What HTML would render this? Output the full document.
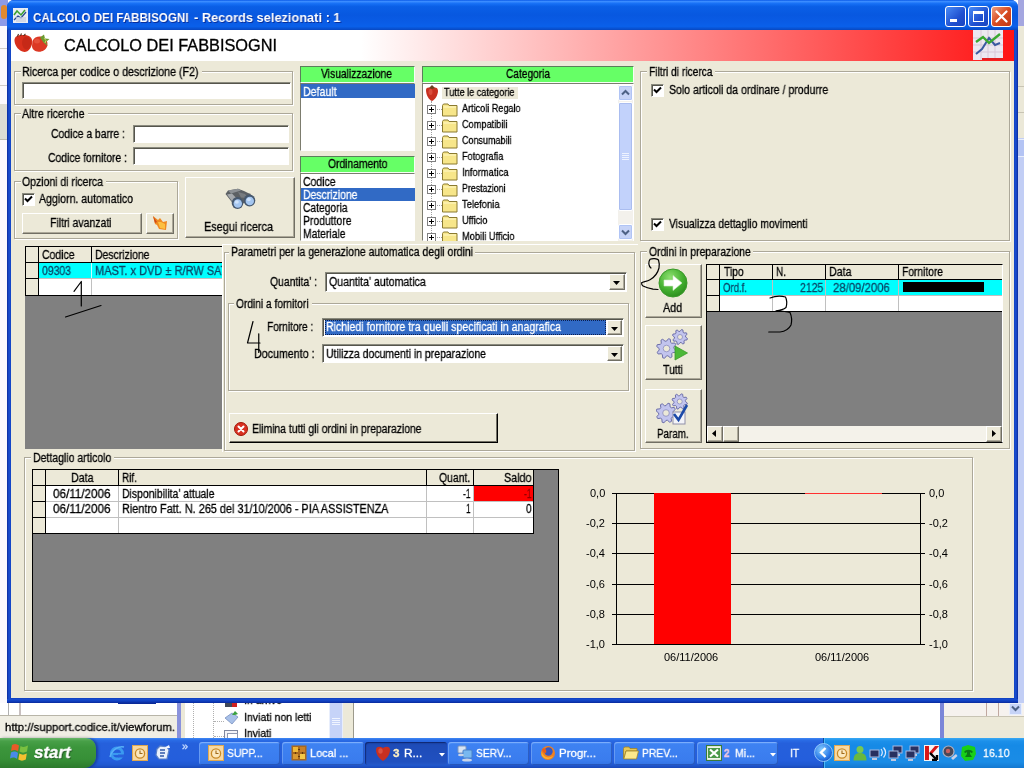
<!DOCTYPE html>
<html lang="it"><head><meta charset="utf-8"><title>CALCOLO DEI FABBISOGNI</title>
<style>
html,body{margin:0;padding:0}
body{width:1024px;height:768px;overflow:hidden;position:relative;background:#fff;font-family:"Liberation Sans",sans-serif;font-size:12.5px}
div,span.t,svg{position:absolute;box-sizing:border-box}
span.t{white-space:nowrap;transform-origin:0 0;display:block;will-change:transform;-webkit-text-stroke:0.3px currentColor}
.face{background:#ece9d8}
.grp{border:1px solid #aca899;box-shadow:1px 1px 0 #fff, inset 1px 1px 0 #fff}
.inp{background:#fff;border:1px solid;border-color:#8a8a7e #fff #fff #8a8a7e;box-shadow:inset 1px 1px 0 #55554c}
.btn{background:#ece9d8;border:1px solid;border-color:#fff #716f64 #716f64 #fff;box-shadow:inset -1px -1px 0 #aca899}
.ghd{background:#66ff66;border:1px solid;border-color:#5a7f5a #f4fff4 #f4fff4 #5a7f5a}
.lst{background:#fff;border:1px solid;border-color:#7c7c6e #fff #fff #7c7c6e}
.sel{background:#316ac5}
.cell{background:#fff}
.hd{background:#ece9d8}

</style></head>
<body>
<div style="left:0px;top:0px;width:1024px;height:768px;background:#fff"></div>
<div style="left:0px;top:0px;width:8px;height:26px;background:#8c9be8"></div>
<div style="left:0px;top:26px;width:8px;height:680px;background:#fbf9fd"></div>
<div style="left:1px;top:5px;width:6px;height:14px;background:#e08a30;border-radius:3px"></div>
<div style="left:0px;top:48px;width:8px;height:1px;background:#d0ccc8"></div>
<div style="left:0px;top:85px;width:8px;height:1px;background:#d0ccc8"></div>
<div style="left:0px;top:104px;width:7px;height:35px;background:#deddd4"></div>
<div style="left:0px;top:139px;width:7px;height:1px;background:#c0bcb0"></div>
<div style="left:1018px;top:0px;width:6px;height:26px;background:#a4a6e0"></div>
<div style="left:1018px;top:26px;width:6px;height:112px;background:#ebe8d8"></div>
<div style="left:1018px;top:86px;width:6px;height:1px;background:#c8c4b4"></div>
<div style="left:1018px;top:112px;width:6px;height:1px;background:#c8c4b4"></div>
<div style="left:1018px;top:138px;width:6px;height:565px;background:#c2cef5"></div>
<div style="left:1018px;top:139px;width:6px;height:18px;background:#b4c4f4;border-top:1px solid #e8eefc;border-bottom:1px solid #e8eefc"></div>
<div style="left:7px;top:0px;width:1011px;height:703px;background:linear-gradient(to right,#0a2a9c 0,#1a4ed0 2px,#1244c4 4px,#1244c4 1007px,#1a4ed0 1009px,#0a2a9c 1011px);border-radius:7px 7px 0 0"></div>
<div style="left:7px;top:699px;width:1011px;height:4px;background:linear-gradient(to bottom,#1a4ed0,#1040c0 50%,#0a2a9c)"></div>
<div style="left:7px;top:0px;width:1011px;height:30px;border-radius:7px 7px 0 0;background:linear-gradient(to bottom,#0a5ae8 0%,#3a8cff 5%,#1670f5 12%,#0a5fe6 22%,#0858e0 50%,#0a5ce6 75%,#0a60ea 88%,#0850d0 96%,#0a48c0 100%)"></div>
<div class="face" style="left:11px;top:30px;width:1003px;height:668px;"></div>
<div style="left:11px;top:30px;width:1003px;height:31px;background:linear-gradient(to right,#fff 0,#fff 350px,#ff1414 1003px)"></div>
<span class="t" style="left:32.70px;top:10px;font-size:13px;line-height:15px;color:#fff;font-weight:700;transform:scaleX(0.8934);text-shadow:1px 1px 0 #0a2f9a;-webkit-text-stroke:0;">CALCOLO DEI FABBISOGNI</span>
<span class="t" style="left:193.90px;top:10px;font-size:13px;line-height:15px;color:#fff;font-weight:700;transform:scaleX(0.9844);text-shadow:1px 1px 0 #0a2f9a;-webkit-text-stroke:0;">- Records selezionati : 1</span>
<span class="t" style="left:63.90px;top:37px;font-size:16px;line-height:17px;color:#000;transform:scaleX(1.0194);">CALCOLO DEI FABBISOGNI</span>
<div style="left:945px;top:6px;width:21px;height:21px;border:1px solid #fff;border-radius:3px;background:linear-gradient(135deg,#4a8cf6,#2050d0 60%,#1a44c0)"></div>
<div style="left:968px;top:6px;width:21px;height:21px;border:1px solid #fff;border-radius:3px;background:linear-gradient(135deg,#4a8cf6,#2050d0 60%,#1a44c0)"></div>
<div style="left:991px;top:6px;width:21px;height:21px;border:1px solid #fff;border-radius:3px;background:linear-gradient(135deg,#f0a080,#d84a20 50%,#c03818)"></div>
<div style="left:950px;top:19px;width:7px;height:3px;background:#fff"></div>
<div style="left:973px;top:11px;width:11px;height:11px;border:1px solid #fff;border-top:3px solid #fff"></div>
<svg style="left:995px;top:10px" width="13" height="13" viewBox="0 0 13 13"><path d="M1.5 1.5 L11.5 11.5 M11.5 1.5 L1.5 11.5" stroke="#fff" stroke-width="2.2" stroke-linecap="round"/></svg>
<div class="grp" style="left:14px;top:71px;width:279px;height:34px;"></div>
<div class="face" style="left:21px;top:65px;width:181px;height:13px;"></div>
<span class="t" style="left:22.40px;top:65px;font-size:12.5px;line-height:14px;color:#000;transform:scaleX(0.8525);">Ricerca per codice o descrizione (F2)</span>
<div class="inp" style="left:22px;top:82px;width:269px;height:17px;"></div>
<div class="grp" style="left:14px;top:113px;width:279px;height:58px;"></div>
<div class="face" style="left:21px;top:107px;width:67px;height:13px;"></div>
<span class="t" style="left:22.40px;top:107px;font-size:12.5px;line-height:14px;color:#000;transform:scaleX(0.8487);">Altre ricerche</span>
<span class="t" style="left:50.65px;top:127px;font-size:12.5px;line-height:14px;color:#000;transform:scaleX(0.8320);">Codice a barre :</span>
<div class="inp" style="left:133px;top:125px;width:156px;height:18px;"></div>
<span class="t" style="left:48.15px;top:151px;font-size:12.5px;line-height:14px;color:#000;transform:scaleX(0.8299);">Codice fornitore :</span>
<div class="inp" style="left:133px;top:147px;width:156px;height:18px;"></div>
<div class="grp" style="left:14px;top:181px;width:164px;height:58px;"></div>
<div class="face" style="left:21px;top:175px;width:85px;height:13px;"></div>
<span class="t" style="left:22.40px;top:175px;font-size:12.5px;line-height:14px;color:#000;transform:scaleX(0.8387);">Opzioni di ricerca</span>
<div class="inp" style="left:22px;top:193px;width:13px;height:13px;"></div>
<svg style="left:24px;top:195px" width="9" height="9" viewBox="0 0 9 9"><path d="M1 3.5 L3.5 6 L8 1.5" fill="none" stroke="#000" stroke-width="2"/></svg>
<span class="t" style="left:39.40px;top:192px;font-size:12.5px;line-height:14px;color:#000;transform:scaleX(0.8454);">Aggiorn. automatico</span>
<div class="btn" style="left:22px;top:213px;width:120px;height:21px;"></div>
<span class="t" style="left:50.40px;top:216px;font-size:12.5px;line-height:14px;color:#000;transform:scaleX(0.8351);">Filtri avanzati</span>
<div class="btn" style="left:146px;top:213px;width:28px;height:21px;"></div>
<div class="btn" style="left:185px;top:177px;width:110px;height:61px;"></div>
<span class="t" style="left:203.90px;top:220px;font-size:12.5px;line-height:14px;color:#000;transform:scaleX(0.8712);">Esegui ricerca</span>
<div class="ghd" style="left:300px;top:66px;width:115px;height:17px;"></div>
<span class="t" style="left:321.40px;top:67px;font-size:12.5px;line-height:14px;color:#000;transform:scaleX(0.8262);">Visualizzazione</span>
<div class="lst" style="left:300px;top:83px;width:115px;height:68px;"></div>
<div class="sel" style="left:301px;top:84px;width:114px;height:14px;"></div>
<span class="t" style="left:302.60px;top:85px;font-size:12.5px;line-height:14px;color:#fff;transform:scaleX(0.8458);">Default</span>
<div class="ghd" style="left:300px;top:156px;width:115px;height:17px;"></div>
<span class="t" style="left:327.90px;top:157px;font-size:12.5px;line-height:14px;color:#000;transform:scaleX(0.8234);">Ordinamento</span>
<div class="lst" style="left:300px;top:173px;width:115px;height:68px;"></div>
<div class="sel" style="left:301px;top:188px;width:114px;height:13px;"></div>
<span class="t" style="left:302.60px;top:175px;font-size:12.5px;line-height:14px;color:#000;transform:scaleX(0.8350);">Codice</span>
<span class="t" style="left:302.60px;top:188px;font-size:12.5px;line-height:14px;color:#fff;transform:scaleX(0.8344);">Descrizione</span>
<span class="t" style="left:302.60px;top:201px;font-size:12.5px;line-height:14px;color:#000;transform:scaleX(0.8210);">Categoria</span>
<span class="t" style="left:302.60px;top:214px;font-size:12.5px;line-height:14px;color:#000;transform:scaleX(0.8308);">Produttore</span>
<span class="t" style="left:302.60px;top:227px;font-size:12.5px;line-height:14px;color:#000;transform:scaleX(0.8265);">Materiale</span>
<div class="ghd" style="left:422px;top:66px;width:212px;height:17px;"></div>
<span class="t" style="left:506.40px;top:67px;font-size:12.5px;line-height:14px;color:#000;transform:scaleX(0.8118);">Categoria</span>
<div class="lst" style="left:422px;top:83px;width:212px;height:158px;"></div>
<div class="face" style="left:442px;top:87px;width:76px;height:12px;"></div>
<span class="t" style="left:443.90px;top:86px;font-size:11.5px;line-height:12px;color:#000;transform:scaleX(0.7972);">Tutte le categorie</span>
<div style="left:431px;top:101px;width:1px;height:140px;border-left:1px dotted #a0a0a0"></div>
<span class="t" style="left:461.90px;top:102px;font-size:11.5px;line-height:12px;color:#000;transform:scaleX(0.7889);">Articoli Regalo</span>
<div style="left:432px;top:109px;width:10px;height:1px;border-top:1px dotted #a0a0a0"></div>
<div style="left:427px;top:105px;width:9px;height:9px;background:#fff;border:1px solid #808080"></div>
<div style="left:429px;top:109px;width:5px;height:1px;background:#000"></div>
<div style="left:431px;top:107px;width:1px;height:5px;background:#000"></div>
<svg style="left:442px;top:103px" width="16" height="14" viewBox="0 0 16 14"><path d="M0.5 2.5 L1.5 1 L6 1 L7 2.5 L15 2.5 L15 13 L0.5 13 Z" fill="#f7e68a" stroke="#8a7a30" stroke-width="1"/><path d="M1.5 4 L14 4" stroke="#fff8c8" stroke-width="1"/></svg>
<span class="t" style="left:461.90px;top:118px;font-size:11.5px;line-height:12px;color:#000;transform:scaleX(0.7998);">Compatibili</span>
<div style="left:432px;top:125px;width:10px;height:1px;border-top:1px dotted #a0a0a0"></div>
<div style="left:427px;top:121px;width:9px;height:9px;background:#fff;border:1px solid #808080"></div>
<div style="left:429px;top:125px;width:5px;height:1px;background:#000"></div>
<div style="left:431px;top:123px;width:1px;height:5px;background:#000"></div>
<svg style="left:442px;top:119px" width="16" height="14" viewBox="0 0 16 14"><path d="M0.5 2.5 L1.5 1 L6 1 L7 2.5 L15 2.5 L15 13 L0.5 13 Z" fill="#f7e68a" stroke="#8a7a30" stroke-width="1"/><path d="M1.5 4 L14 4" stroke="#fff8c8" stroke-width="1"/></svg>
<span class="t" style="left:461.90px;top:134px;font-size:11.5px;line-height:12px;color:#000;transform:scaleX(0.7822);">Consumabili</span>
<div style="left:432px;top:141px;width:10px;height:1px;border-top:1px dotted #a0a0a0"></div>
<div style="left:427px;top:137px;width:9px;height:9px;background:#fff;border:1px solid #808080"></div>
<div style="left:429px;top:141px;width:5px;height:1px;background:#000"></div>
<div style="left:431px;top:139px;width:1px;height:5px;background:#000"></div>
<svg style="left:442px;top:135px" width="16" height="14" viewBox="0 0 16 14"><path d="M0.5 2.5 L1.5 1 L6 1 L7 2.5 L15 2.5 L15 13 L0.5 13 Z" fill="#f7e68a" stroke="#8a7a30" stroke-width="1"/><path d="M1.5 4 L14 4" stroke="#fff8c8" stroke-width="1"/></svg>
<span class="t" style="left:461.90px;top:150px;font-size:11.5px;line-height:12px;color:#000;transform:scaleX(0.7966);">Fotografia</span>
<div style="left:432px;top:157px;width:10px;height:1px;border-top:1px dotted #a0a0a0"></div>
<div style="left:427px;top:153px;width:9px;height:9px;background:#fff;border:1px solid #808080"></div>
<div style="left:429px;top:157px;width:5px;height:1px;background:#000"></div>
<div style="left:431px;top:155px;width:1px;height:5px;background:#000"></div>
<svg style="left:442px;top:151px" width="16" height="14" viewBox="0 0 16 14"><path d="M0.5 2.5 L1.5 1 L6 1 L7 2.5 L15 2.5 L15 13 L0.5 13 Z" fill="#f7e68a" stroke="#8a7a30" stroke-width="1"/><path d="M1.5 4 L14 4" stroke="#fff8c8" stroke-width="1"/></svg>
<span class="t" style="left:461.90px;top:166px;font-size:11.5px;line-height:12px;color:#000;transform:scaleX(0.8174);">Informatica</span>
<div style="left:432px;top:173px;width:10px;height:1px;border-top:1px dotted #a0a0a0"></div>
<div style="left:427px;top:169px;width:9px;height:9px;background:#fff;border:1px solid #808080"></div>
<div style="left:429px;top:173px;width:5px;height:1px;background:#000"></div>
<div style="left:431px;top:171px;width:1px;height:5px;background:#000"></div>
<svg style="left:442px;top:167px" width="16" height="14" viewBox="0 0 16 14"><path d="M0.5 2.5 L1.5 1 L6 1 L7 2.5 L15 2.5 L15 13 L0.5 13 Z" fill="#f7e68a" stroke="#8a7a30" stroke-width="1"/><path d="M1.5 4 L14 4" stroke="#fff8c8" stroke-width="1"/></svg>
<span class="t" style="left:461.90px;top:182px;font-size:11.5px;line-height:12px;color:#000;transform:scaleX(0.7646);">Prestazioni</span>
<div style="left:432px;top:189px;width:10px;height:1px;border-top:1px dotted #a0a0a0"></div>
<div style="left:427px;top:185px;width:9px;height:9px;background:#fff;border:1px solid #808080"></div>
<div style="left:429px;top:189px;width:5px;height:1px;background:#000"></div>
<div style="left:431px;top:187px;width:1px;height:5px;background:#000"></div>
<svg style="left:442px;top:183px" width="16" height="14" viewBox="0 0 16 14"><path d="M0.5 2.5 L1.5 1 L6 1 L7 2.5 L15 2.5 L15 13 L0.5 13 Z" fill="#f7e68a" stroke="#8a7a30" stroke-width="1"/><path d="M1.5 4 L14 4" stroke="#fff8c8" stroke-width="1"/></svg>
<span class="t" style="left:461.90px;top:198px;font-size:11.5px;line-height:12px;color:#000;transform:scaleX(0.8144);">Telefonia</span>
<div style="left:432px;top:205px;width:10px;height:1px;border-top:1px dotted #a0a0a0"></div>
<div style="left:427px;top:201px;width:9px;height:9px;background:#fff;border:1px solid #808080"></div>
<div style="left:429px;top:205px;width:5px;height:1px;background:#000"></div>
<div style="left:431px;top:203px;width:1px;height:5px;background:#000"></div>
<svg style="left:442px;top:199px" width="16" height="14" viewBox="0 0 16 14"><path d="M0.5 2.5 L1.5 1 L6 1 L7 2.5 L15 2.5 L15 13 L0.5 13 Z" fill="#f7e68a" stroke="#8a7a30" stroke-width="1"/><path d="M1.5 4 L14 4" stroke="#fff8c8" stroke-width="1"/></svg>
<span class="t" style="left:461.90px;top:214px;font-size:11.5px;line-height:12px;color:#000;transform:scaleX(0.8031);">Ufficio</span>
<div style="left:432px;top:221px;width:10px;height:1px;border-top:1px dotted #a0a0a0"></div>
<div style="left:427px;top:217px;width:9px;height:9px;background:#fff;border:1px solid #808080"></div>
<div style="left:429px;top:221px;width:5px;height:1px;background:#000"></div>
<div style="left:431px;top:219px;width:1px;height:5px;background:#000"></div>
<svg style="left:442px;top:215px" width="16" height="14" viewBox="0 0 16 14"><path d="M0.5 2.5 L1.5 1 L6 1 L7 2.5 L15 2.5 L15 13 L0.5 13 Z" fill="#f7e68a" stroke="#8a7a30" stroke-width="1"/><path d="M1.5 4 L14 4" stroke="#fff8c8" stroke-width="1"/></svg>
<span class="t" style="left:461.90px;top:230px;font-size:11.5px;line-height:12px;color:#000;transform:scaleX(0.8079);">Mobili Ufficio</span>
<div style="left:432px;top:237px;width:10px;height:1px;border-top:1px dotted #a0a0a0"></div>
<div style="left:427px;top:233px;width:9px;height:9px;background:#fff;border:1px solid #808080"></div>
<div style="left:429px;top:237px;width:5px;height:1px;background:#000"></div>
<div style="left:431px;top:235px;width:1px;height:5px;background:#000"></div>
<svg style="left:442px;top:231px" width="16" height="14" viewBox="0 0 16 14"><path d="M0.5 2.5 L1.5 1 L6 1 L7 2.5 L15 2.5 L15 13 L0.5 13 Z" fill="#f7e68a" stroke="#8a7a30" stroke-width="1"/><path d="M1.5 4 L14 4" stroke="#fff8c8" stroke-width="1"/></svg>
<div style="left:618px;top:85px;width:15px;height:156px;background:#f3f1ec"></div>
<div style="left:618px;top:85px;width:15px;height:16px;background:#c6d3f7;border:1px solid #fff;border-radius:2px;box-shadow:inset 0 0 0 1px #b0c4f5"></div>
<div style="left:618px;top:102px;width:15px;height:109px;background:#c2d2fb;border:1px solid #fff;border-radius:2px;box-shadow:inset 0 0 0 1px #aabdf0"></div>
<div style="left:618px;top:224px;width:15px;height:16px;background:#c6d3f7;border:1px solid #fff;border-radius:2px;box-shadow:inset 0 0 0 1px #b0c4f5"></div>
<svg style="left:621px;top:89px" width="9" height="7" viewBox="0 0 9 7"><path d="M1 5.5 L4.5 2 L8 5.5" fill="none" stroke="#4d6185" stroke-width="2"/></svg>
<svg style="left:621px;top:229px" width="9" height="7" viewBox="0 0 9 7"><path d="M1 1.5 L4.5 5 L8 1.5" fill="none" stroke="#4d6185" stroke-width="2"/></svg>
<div style="left:622px;top:153px;width:7px;height:1px;background:#eef3ff"></div>
<div style="left:622px;top:155px;width:7px;height:1px;background:#eef3ff"></div>
<div style="left:622px;top:157px;width:7px;height:1px;background:#eef3ff"></div>
<div style="left:622px;top:159px;width:7px;height:1px;background:#eef3ff"></div>
<div class="face" style="left:422px;top:241px;width:213px;height:3px;"></div>
<div class="face" style="left:300px;top:241px;width:116px;height:3px;"></div>
<div class="grp" style="left:640px;top:71px;width:370px;height:170px;"></div>
<div class="face" style="left:647px;top:65px;width:68px;height:13px;"></div>
<span class="t" style="left:648.90px;top:65px;font-size:12.5px;line-height:14px;color:#000;transform:scaleX(0.8162);">Filtri di ricerca</span>
<div class="inp" style="left:651px;top:84px;width:13px;height:13px;"></div>
<svg style="left:653px;top:86px" width="9" height="9" viewBox="0 0 9 9"><path d="M1 3.5 L3.5 6 L8 1.5" fill="none" stroke="#000" stroke-width="2"/></svg>
<div class="inp" style="left:651px;top:218px;width:13px;height:13px;"></div>
<svg style="left:653px;top:220px" width="9" height="9" viewBox="0 0 9 9"><path d="M1 3.5 L3.5 6 L8 1.5" fill="none" stroke="#000" stroke-width="2"/></svg>
<span class="t" style="left:668.90px;top:83px;font-size:12.5px;line-height:14px;color:#000;transform:scaleX(0.8426);">Solo articoli da ordinare / produrre</span>
<span class="t" style="left:668.90px;top:217px;font-size:12.5px;line-height:14px;color:#000;transform:scaleX(0.8283);">Visualizza dettaglio movimenti</span>
<div style="left:25px;top:246px;width:200px;height:203px;background:#808080"></div>
<div style="left:25px;top:246px;width:200px;height:50px;background:#000"></div>
<div class="hd" style="left:26px;top:247px;width:198px;height:16px;"></div>
<div class="hd" style="left:26px;top:263px;width:13px;height:32px;"></div>
<div style="left:39px;top:263px;width:185px;height:15px;background:#00ffff"></div>
<div class="cell" style="left:39px;top:279px;width:185px;height:16px;"></div>
<div style="left:26px;top:262px;width:198px;height:1px;background:#000"></div>
<div style="left:26px;top:278px;width:13px;height:1px;background:#000"></div>
<div style="left:38px;top:247px;width:1px;height:48px;background:#000"></div>
<div style="left:91px;top:247px;width:1px;height:16px;background:#000"></div>
<div style="left:91px;top:263px;width:1px;height:15px;background:#c8ffff"></div>
<div style="left:91px;top:279px;width:1px;height:16px;background:#c0c0c0"></div>
<div style="left:39px;top:278px;width:185px;height:1px;background:#c0c0c0"></div>
<span class="t" style="left:41.90px;top:248px;font-size:12.5px;line-height:14px;color:#000;transform:scaleX(0.8350);">Codice</span>
<span class="t" style="left:95.15px;top:248px;font-size:12.5px;line-height:14px;color:#000;transform:scaleX(0.8344);">Descrizione</span>
<span class="t" style="left:42.40px;top:264px;font-size:12.5px;line-height:14px;color:#0a4868;transform:scaleX(0.8342);">09303</span>
<span class="t" style="left:95.15px;top:264px;font-size:12.5px;line-height:14px;color:#0a4868;transform:scaleX(0.8821);">MAST. x DVD ± R/RW SATA</span>
<div class="face" style="left:222px;top:244px;width:416px;height:208px;border-left:1px solid #fff;border-top:1px solid #fff"></div>
<div class="grp" style="left:224px;top:252px;width:411px;height:199px;"></div>
<div class="face" style="left:229px;top:246px;width:246px;height:13px;"></div>
<span class="t" style="left:230.65px;top:245px;font-size:12.5px;line-height:14px;color:#000;transform:scaleX(0.8352);">Parametri per la generazione automatica degli ordini</span>
<span class="t" style="left:269.90px;top:275px;font-size:12.5px;line-height:14px;color:#000;transform:scaleX(0.8305);">Quantita' :</span>
<div class="inp" style="left:325px;top:272px;width:302px;height:20px;"></div>
<span class="t" style="left:328.90px;top:275px;font-size:12.5px;line-height:14px;color:#000;transform:scaleX(0.8467);">Quantita' automatica</span>
<div class="btn" style="left:609px;top:274px;width:16px;height:16px;"></div>
<div class="grp" style="left:228px;top:303px;width:401px;height:88px;"></div>
<div class="face" style="left:234px;top:297px;width:78px;height:13px;"></div>
<span class="t" style="left:236.15px;top:297px;font-size:12.5px;line-height:14px;color:#000;transform:scaleX(0.8152);">Ordini a fornitori</span>
<span class="t" style="left:266.90px;top:320px;font-size:12.5px;line-height:14px;color:#000;transform:scaleX(0.8118);">Fornitore :</span>
<div class="inp" style="left:322px;top:318px;width:302px;height:19px;"></div>
<div class="sel" style="left:325px;top:320px;width:281px;height:15px;border:1px dotted #0a1e50"></div>
<span class="t" style="left:325.65px;top:320px;font-size:12.5px;line-height:14px;color:#fff;transform:scaleX(0.8456);">Richiedi fornitore tra quelli specificati in anagrafica</span>
<div class="btn" style="left:607px;top:320px;width:15px;height:15px;"></div>
<span class="t" style="left:253.90px;top:347px;font-size:12.5px;line-height:14px;color:#000;transform:scaleX(0.8536);">Documento :</span>
<div class="inp" style="left:322px;top:344px;width:302px;height:19px;"></div>
<span class="t" style="left:325.65px;top:347px;font-size:12.5px;line-height:14px;color:#000;transform:scaleX(0.8374);">Utilizza documenti in preparazione</span>
<div class="btn" style="left:607px;top:346px;width:15px;height:15px;"></div>
<svg style="left:613px;top:281px" width="7" height="4" viewBox="0 0 7 4"><path d="M0 0 L7 0 L3.5 4 Z" fill="#000"/></svg>
<svg style="left:611px;top:327px" width="7" height="4" viewBox="0 0 7 4"><path d="M0 0 L7 0 L3.5 4 Z" fill="#000"/></svg>
<svg style="left:611px;top:353px" width="7" height="4" viewBox="0 0 7 4"><path d="M0 0 L7 0 L3.5 4 Z" fill="#000"/></svg>
<div style="left:229px;top:413px;width:269px;height:30px;border:1px solid;border-color:#fff #000 #000 #fff;box-shadow:inset -1px -1px 0 #716f64;background:#ece9d8"></div>
<svg style="left:234px;top:422px" width="14" height="14" viewBox="0 0 14 14"><circle cx="7" cy="7" r="6.5" fill="#d83020" stroke="#a01808" stroke-width="1"/><path d="M4.5 4.5 L9.5 9.5 M9.5 4.5 L4.5 9.5" stroke="#fff" stroke-width="2" stroke-linecap="round"/></svg>
<span class="t" style="left:252.40px;top:422px;font-size:12.5px;line-height:14px;color:#000;transform:scaleX(0.8297);">Elimina tutti gli ordini in preparazione</span>
<div class="grp" style="left:640px;top:251px;width:370px;height:198px;"></div>
<div class="face" style="left:647px;top:245px;width:106px;height:13px;"></div>
<span class="t" style="left:648.90px;top:245px;font-size:12.5px;line-height:14px;color:#000;transform:scaleX(0.8272);">Ordini in preparazione</span>
<div class="btn" style="left:645px;top:264px;width:57px;height:54px;"></div>
<div class="btn" style="left:645px;top:325px;width:57px;height:55px;"></div>
<div class="btn" style="left:645px;top:389px;width:57px;height:54px;"></div>
<span class="t" style="left:663.40px;top:301px;font-size:12.5px;line-height:14px;color:#000;transform:scaleX(0.8629);">Add</span>
<span class="t" style="left:663.15px;top:363px;font-size:12.5px;line-height:14px;color:#000;transform:scaleX(0.8382);">Tutti</span>
<span class="t" style="left:657.10px;top:427px;font-size:12.5px;line-height:14px;color:#000;transform:scaleX(0.7842);">Param.</span>
<div style="left:706px;top:264px;width:297px;height:179px;background:#808080;border:1px solid #000;border-right:1px solid #fff"></div>
<div class="hd" style="left:707px;top:265px;width:295px;height:15px;"></div>
<div class="hd" style="left:707px;top:280px;width:13px;height:31px;"></div>
<div style="left:720px;top:280px;width:282px;height:15px;background:#00ffff"></div>
<div class="cell" style="left:720px;top:296px;width:282px;height:15px;"></div>
<div style="left:707px;top:279px;width:295px;height:1px;background:#000"></div>
<div style="left:707px;top:295px;width:13px;height:1px;background:#000"></div>
<div style="left:720px;top:295px;width:282px;height:1px;background:#c0c0c0"></div>
<div style="left:707px;top:311px;width:295px;height:1px;background:#000"></div>
<div style="left:719px;top:265px;width:1px;height:46px;background:#000"></div>
<div style="left:772px;top:265px;width:1px;height:15px;background:#000"></div>
<div style="left:772px;top:280px;width:1px;height:31px;background:#c0c0c0"></div>
<div style="left:825px;top:265px;width:1px;height:15px;background:#000"></div>
<div style="left:825px;top:280px;width:1px;height:31px;background:#c0c0c0"></div>
<div style="left:898px;top:265px;width:1px;height:15px;background:#000"></div>
<div style="left:898px;top:280px;width:1px;height:31px;background:#c0c0c0"></div>
<span class="t" style="left:723.65px;top:265px;font-size:12.5px;line-height:14px;color:#000;transform:scaleX(0.8173);">Tipo</span>
<span class="t" style="left:775.65px;top:265px;font-size:12.5px;line-height:14px;color:#000;transform:scaleX(0.8000);">N.</span>
<span class="t" style="left:828.90px;top:265px;font-size:12.5px;line-height:14px;color:#000;transform:scaleX(0.8521);">Data</span>
<span class="t" style="left:901.80px;top:265px;font-size:12.5px;line-height:14px;color:#000;transform:scaleX(0.8195);">Fornitore</span>
<span class="t" style="left:723.40px;top:281px;font-size:12.5px;line-height:14px;color:#0a4868;transform:scaleX(0.7676);">Ord.f.</span>
<span class="t" style="left:800.00px;top:281px;font-size:12.5px;line-height:14px;color:#0a4868;transform:scaleX(0.8360);">2125</span>
<span class="t" style="left:833.40px;top:281px;font-size:12.5px;line-height:14px;color:#0a4868;transform:scaleX(0.9079);">28/09/2006</span>
<div style="left:903px;top:282px;width:81px;height:10px;background:#000"></div>
<div style="left:707px;top:426px;width:295px;height:16px;background:#f4f2ea"></div>
<div class="btn" style="left:707px;top:426px;width:16px;height:16px;"></div>
<div class="btn" style="left:723px;top:426px;width:16px;height:16px;"></div>
<div class="btn" style="left:986px;top:426px;width:16px;height:16px;"></div>
<svg style="left:712px;top:430px" width="4" height="7" viewBox="0 0 4 7"><path d="M4 0 L4 7 L0 3.5 Z" fill="#000"/></svg>
<svg style="left:992px;top:430px" width="4" height="7" viewBox="0 0 4 7"><path d="M0 0 L0 7 L4 3.5 Z" fill="#000"/></svg>
<div class="grp" style="left:24px;top:457px;width:949px;height:234px;"></div>
<div class="face" style="left:31px;top:451px;width:83px;height:13px;"></div>
<span class="t" style="left:33.15px;top:451px;font-size:12.5px;line-height:14px;color:#000;transform:scaleX(0.8404);">Dettaglio articolo</span>
<div style="left:32px;top:469px;width:527px;height:213px;background:#808080;border:1px solid #000"></div>
<div class="hd" style="left:33px;top:470px;width:501px;height:16px;"></div>
<div class="hd" style="left:33px;top:486px;width:13px;height:47px;"></div>
<div class="cell" style="left:46px;top:486px;width:488px;height:47px;"></div>
<div style="left:474px;top:486px;width:60px;height:15px;background:#ff0000"></div>
<div style="left:33px;top:485px;width:13px;height:1px;background:#000"></div>
<div style="left:33px;top:501px;width:13px;height:1px;background:#000"></div>
<div style="left:46px;top:501px;width:488px;height:1px;background:#c0c0c0"></div>
<div style="left:33px;top:517px;width:13px;height:1px;background:#000"></div>
<div style="left:46px;top:517px;width:488px;height:1px;background:#c0c0c0"></div>
<div style="left:33px;top:485px;width:501px;height:1px;background:#000"></div>
<div style="left:33px;top:533px;width:501px;height:1px;background:#000"></div>
<div style="left:533px;top:470px;width:1px;height:64px;background:#000"></div>
<div style="left:45px;top:470px;width:1px;height:64px;background:#000"></div>
<div style="left:118px;top:470px;width:1px;height:16px;background:#000"></div>
<div style="left:118px;top:486px;width:1px;height:47px;background:#c0c0c0"></div>
<div style="left:426px;top:470px;width:1px;height:16px;background:#000"></div>
<div style="left:426px;top:486px;width:1px;height:47px;background:#c0c0c0"></div>
<div style="left:473px;top:470px;width:1px;height:16px;background:#000"></div>
<div style="left:473px;top:486px;width:1px;height:47px;background:#c0c0c0"></div>
<span class="t" style="left:71.15px;top:471px;font-size:12.5px;line-height:14px;color:#000;transform:scaleX(0.8521);">Data</span>
<span class="t" style="left:121.90px;top:471px;font-size:12.5px;line-height:14px;color:#000;transform:scaleX(0.8000);">Rif.</span>
<span class="t" style="left:438.65px;top:471px;font-size:12.5px;line-height:14px;color:#000;transform:scaleX(0.8326);">Quant.</span>
<span class="t" style="left:503.65px;top:471px;font-size:12.5px;line-height:14px;color:#000;transform:scaleX(0.8598);">Saldo</span>
<span class="t" style="left:53.15px;top:487px;font-size:12.5px;line-height:14px;color:#000;transform:scaleX(0.9328);">06/11/2006</span>
<span class="t" style="left:121.90px;top:487px;font-size:12.5px;line-height:14px;color:#000;transform:scaleX(0.8349);">Disponibilita' attuale</span>
<span class="t" style="left:462.50px;top:487px;font-size:12.5px;line-height:14px;color:#000;transform:scaleX(0.6742);">-1</span>
<span class="t" style="left:523.50px;top:487px;font-size:12.5px;line-height:14px;color:#900000;transform:scaleX(0.6742);">-1</span>
<span class="t" style="left:53.15px;top:502px;font-size:12.5px;line-height:14px;color:#000;transform:scaleX(0.9328);">06/11/2006</span>
<span class="t" style="left:121.90px;top:502px;font-size:12.5px;line-height:14px;color:#000;transform:scaleX(0.8697);">Rientro Fatt. N. 265 del 31/10/2006 - PIA ASSISTENZA</span>
<span class="t" style="left:465.50px;top:502px;font-size:12.5px;line-height:14px;color:#000;transform:scaleX(0.6472);">1</span>
<span class="t" style="left:525.50px;top:502px;font-size:12.5px;line-height:14px;color:#000;transform:scaleX(0.7910);">0</span>
<div style="left:612px;top:493px;width:313px;height:1px;background:#000"></div>
<span class="t" style="left:589.70px;top:487px;font-size:11px;line-height:12px;color:#000;-webkit-text-stroke:0;">0,0</span>
<span class="t" style="left:929.40px;top:487px;font-size:11px;line-height:12px;color:#000;-webkit-text-stroke:0;">0,0</span>
<div style="left:612px;top:523px;width:313px;height:1px;background:#000"></div>
<span class="t" style="left:586.03px;top:517px;font-size:11px;line-height:12px;color:#000;-webkit-text-stroke:0;">-0,2</span>
<span class="t" style="left:929.40px;top:517px;font-size:11px;line-height:12px;color:#000;-webkit-text-stroke:0;">-0,2</span>
<div style="left:612px;top:553px;width:313px;height:1px;background:#000"></div>
<span class="t" style="left:586.03px;top:547px;font-size:11px;line-height:12px;color:#000;-webkit-text-stroke:0;">-0,4</span>
<span class="t" style="left:929.40px;top:547px;font-size:11px;line-height:12px;color:#000;-webkit-text-stroke:0;">-0,4</span>
<div style="left:612px;top:584px;width:313px;height:1px;background:#000"></div>
<span class="t" style="left:586.03px;top:578px;font-size:11px;line-height:12px;color:#000;-webkit-text-stroke:0;">-0,6</span>
<span class="t" style="left:929.40px;top:578px;font-size:11px;line-height:12px;color:#000;-webkit-text-stroke:0;">-0,6</span>
<div style="left:612px;top:614px;width:313px;height:1px;background:#000"></div>
<span class="t" style="left:586.03px;top:608px;font-size:11px;line-height:12px;color:#000;-webkit-text-stroke:0;">-0,8</span>
<span class="t" style="left:929.40px;top:608px;font-size:11px;line-height:12px;color:#000;-webkit-text-stroke:0;">-0,8</span>
<div style="left:612px;top:644px;width:313px;height:1px;background:#000"></div>
<span class="t" style="left:586.03px;top:638px;font-size:11px;line-height:12px;color:#000;-webkit-text-stroke:0;">-1,0</span>
<span class="t" style="left:929.40px;top:638px;font-size:11px;line-height:12px;color:#000;-webkit-text-stroke:0;">-1,0</span>
<div style="left:654px;top:493px;width:77px;height:151px;background:#ff0000"></div>
<div style="left:805px;top:493px;width:77px;height:1px;background:#ff3030"></div>
<div style="left:616px;top:493px;width:1px;height:152px;background:#000"></div>
<div style="left:920px;top:493px;width:1px;height:152px;background:#000"></div>
<span class="t" style="left:663.88px;top:651px;font-size:11px;line-height:12px;color:#000;-webkit-text-stroke:0;">06/11/2006</span>
<span class="t" style="left:814.88px;top:651px;font-size:11px;line-height:12px;color:#000;-webkit-text-stroke:0;">06/11/2006</span>
<div style="left:0px;top:703px;width:1024px;height:35px;background:#fff"></div>
<div style="left:8px;top:703px;width:1px;height:13px;background:#b0b0b0"></div>
<div style="left:19px;top:703px;width:2px;height:13px;background:#c8c0c0"></div>
<div style="left:118px;top:703px;width:38px;height:1px;background:#0a2a98"></div>
<div style="left:0px;top:715px;width:178px;height:23px;background:#f0eee4;border-top:1px solid #b8b5a8"></div>
<span class="t" style="left:4.65px;top:721px;font-size:11.5px;line-height:12px;color:#000;transform:scaleX(0.9923);">http://support.codice.it/viewforum.</span>
<div style="left:177px;top:703px;width:4px;height:35px;background:#8a92dc"></div>
<div style="left:181px;top:703px;width:4px;height:35px;background:#ece9d8"></div>
<div style="left:193px;top:703px;width:1px;height:35px;border-left:1px dotted #b0b0b0"></div>
<div style="left:213px;top:703px;width:1px;height:35px;border-left:1px dotted #b0b0b0"></div>
<div style="left:214px;top:721px;width:10px;height:1px;border-top:1px dotted #b0b0b0"></div>
<div style="left:214px;top:736px;width:10px;height:1px;border-top:1px dotted #b0b0b0"></div>
<span class="t" style="left:244.10px;top:694px;font-size:11.5px;line-height:12px;color:#000;transform:scaleX(0.9146);clip-path:inset(9px 0 0 0);">In arrivo</span>
<span class="t" style="left:244.10px;top:711px;font-size:11.5px;line-height:12px;color:#000;transform:scaleX(0.9182);">Inviati non letti</span>
<span class="t" style="left:244.10px;top:727px;font-size:11.5px;line-height:12px;color:#000;transform:scaleX(0.9086);">Inviati</span>
<svg style="left:223px;top:703px" width="17" height="35" viewBox="0 0 17 35"><rect x="2" y="0" width="9" height="4" fill="#404858"/><rect x="9" y="0" width="5" height="4" fill="#d02020"/><path d="M2 15 L9 10 L15 14 L9 21 Z" fill="#a8c0e8" stroke="#7890c0" stroke-width=".8"/><path d="M9 12 L12 8 L15 11 L12 12 Z" fill="#3aa040"/><rect x="1.5" y="27.5" width="13" height="9" fill="#f4f4f8" stroke="#8088a0" stroke-width="1"/><rect x="4.500" y="30.5" width="10" height="6" fill="#fff" stroke="#9098b0" stroke-width="1"/></svg>
<div style="left:329px;top:703px;width:14px;height:35px;background:#c6d3f8;border-left:1px solid #e8eefc;border-right:1px solid #e8eefc"></div>
<div style="left:332px;top:718px;width:8px;height:1px;background:#f0f4ff"></div>
<div style="left:332px;top:720px;width:8px;height:1px;background:#f0f4ff"></div>
<div style="left:332px;top:722px;width:8px;height:1px;background:#f0f4ff"></div>
<div style="left:332px;top:724px;width:8px;height:1px;background:#f0f4ff"></div>
<div style="left:343px;top:703px;width:10px;height:35px;background:#ece9d8"></div>
<div style="left:353px;top:703px;width:1px;height:35px;background:#9c9a8c"></div>
<div style="left:940px;top:703px;width:4px;height:35px;background:#7b86d8"></div>
<div style="left:944px;top:703px;width:80px;height:35px;background:#ece9d8"></div>
<div style="left:944px;top:703px;width:80px;height:13px;background:#f6f2ee"></div>
<div style="left:944px;top:716px;width:80px;height:1px;background:#c8c4b4"></div>
<div style="left:986px;top:703px;width:1px;height:13px;background:#c0a8a0"></div>
<div style="left:998px;top:703px;width:1px;height:13px;background:#c0a8a0"></div>
<div style="left:1009px;top:703px;width:13px;height:12px;background:#c6d3f7;border:1px solid #e8eefc"></div>
<svg style="left:1011px;top:705px" width="9" height="7" viewBox="0 0 9 7"><path d="M1 1.5 L4.5 5 L8 1.5" fill="none" stroke="#4d6185" stroke-width="2"/></svg>
<div style="left:0px;top:738px;width:1024px;height:30px;background:linear-gradient(to bottom,#3f88f4 0%,#2a6ce6 7%,#2560dc 18%,#245edc 75%,#2058d0 90%,#1a48b8 100%)"></div>
<div style="left:0px;top:738px;width:96px;height:30px;border-radius:0 10px 12px 0;background:linear-gradient(to bottom,#6ab86a 0%,#48a048 10%,#3c963c 30%,#379037 70%,#2c7a2c 100%);box-shadow:2px 0 3px rgba(0,0,40,.35)"></div>
<svg style="left:10px;top:743px" width="20" height="18" viewBox="0 0 20 18"><path d="M2 2 C5 0 7 1 9 2.5 L8 8.500 C6 7 4 6.500 1 8 Z" fill="#e85a28"/><path d="M10.500 3 C13 4.500 15 4 18 2.500 L17 8.500 C14 10 12 10 9.500 8.500 Z" fill="#7ac040"/><path d="M1 9.500 C4 8 6 8.500 8 10 L7 16 C5 14.500 3 14 0 15.500 Z" fill="#4a8ae8"/><path d="M9.300 10.500 C12 12 14 12 16.800 10.500 L15.800 16.500 C13 18 11 18 8.300 16.500 Z" fill="#f4c030"/></svg>
<span class="t" style="left:34.10px;top:743px;font-size:17px;line-height:19px;color:#fff;font-weight:700;transform:scaleX(0.9930);font-style:italic;text-shadow:1px 1px 1px rgba(0,0,0,.45);">start</span>
<svg style="left:109px;top:745px" width="16" height="16" viewBox="0 0 16 16"><circle cx="8" cy="8.500" r="5.500" fill="none" stroke="#3a9af0" stroke-width="3"/><path d="M3 9 H13" stroke="#3a9af0" stroke-width="2.200"/><path d="M1 12 C3 4 10 1 15 2" fill="none" stroke="#58b0f8" stroke-width="1.500"/><rect x="9" y="9.500" width="6" height="3" fill="#2862dc"/></svg>
<svg style="left:132px;top:745px" width="16" height="16" viewBox="0 0 16 16"><rect x=".5" y=".5" width="15" height="15" fill="#f8d8a0" stroke="#e0a850" stroke-width="1"/><circle cx="8" cy="8.500" r="4.600" fill="#fbe8c0" stroke="#c88a28" stroke-width="1.300"/><path d="M8 5.500 V8.500 H10.500" fill="none" stroke="#a06818" stroke-width="1.100"/></svg>
<svg style="left:155px;top:745px" width="16" height="16" viewBox="0 0 16 16"><path d="M2 4 L5 1 L12 2 L14 5 L12 14 L4 14 L1 10 Z" fill="#e8f0fc" stroke="#5a80c8" stroke-width="1.200"/><path d="M5 5 H10 M5 8 H10 M5 11 H9" stroke="#3058a8" stroke-width="1.400"/><path d="M9 3 L14 0 L15 3 Z" fill="#f0f4ff"/></svg>
<span class="t" style="left:182.40px;top:740px;font-size:11px;line-height:12px;color:#c8dcff;">»</span>
<div style="left:199px;top:742px;width:81px;height:23px;border-radius:3px;background:linear-gradient(to bottom,#5c9cff 0%,#3e82f2 10%,#3a7cee 80%,#3272e4 100%);box-shadow:inset 1px 1px 0 rgba(255,255,255,.22), inset -1px -1px 0 rgba(0,0,60,.25)"></div>
<span class="t" style="left:227.20px;top:747px;font-size:11.5px;line-height:12px;color:#fff;transform:scaleX(0.9031);">SUPP...</span>
<div style="left:282px;top:742px;width:82px;height:23px;border-radius:3px;background:linear-gradient(to bottom,#5c9cff 0%,#3e82f2 10%,#3a7cee 80%,#3272e4 100%);box-shadow:inset 1px 1px 0 rgba(255,255,255,.22), inset -1px -1px 0 rgba(0,0,60,.25)"></div>
<span class="t" style="left:310.20px;top:747px;font-size:11.5px;line-height:12px;color:#fff;transform:scaleX(0.9533);">Local ...</span>
<div style="left:365px;top:742px;width:82px;height:23px;border-radius:3px;background:linear-gradient(to bottom,#1a44a8 0%,#1e4cb8 15%,#2050c0 85%,#2458c8 100%);box-shadow:inset 1px 1px 1px rgba(0,0,40,.45)"></div>
<div style="left:448px;top:742px;width:81px;height:23px;border-radius:3px;background:linear-gradient(to bottom,#5c9cff 0%,#3e82f2 10%,#3a7cee 80%,#3272e4 100%);box-shadow:inset 1px 1px 0 rgba(255,255,255,.22), inset -1px -1px 0 rgba(0,0,60,.25)"></div>
<span class="t" style="left:476.20px;top:747px;font-size:11.5px;line-height:12px;color:#fff;transform:scaleX(0.8930);">SERV...</span>
<div style="left:531px;top:742px;width:81px;height:23px;border-radius:3px;background:linear-gradient(to bottom,#5c9cff 0%,#3e82f2 10%,#3a7cee 80%,#3272e4 100%);box-shadow:inset 1px 1px 0 rgba(255,255,255,.22), inset -1px -1px 0 rgba(0,0,60,.25)"></div>
<span class="t" style="left:559.20px;top:747px;font-size:11.5px;line-height:12px;color:#fff;transform:scaleX(0.9925);">Progr...</span>
<div style="left:614px;top:742px;width:81px;height:23px;border-radius:3px;background:linear-gradient(to bottom,#5c9cff 0%,#3e82f2 10%,#3a7cee 80%,#3272e4 100%);box-shadow:inset 1px 1px 0 rgba(255,255,255,.22), inset -1px -1px 0 rgba(0,0,60,.25)"></div>
<span class="t" style="left:642.20px;top:747px;font-size:11.5px;line-height:12px;color:#fff;transform:scaleX(0.8956);">PREV...</span>
<div style="left:697px;top:742px;width:81px;height:23px;border-radius:3px;background:linear-gradient(to bottom,#5c9cff 0%,#3e82f2 10%,#3a7cee 80%,#3272e4 100%);box-shadow:inset 1px 1px 0 rgba(255,255,255,.22), inset -1px -1px 0 rgba(0,0,60,.25)"></div>
<span class="t" style="left:393.15px;top:747px;font-size:11.5px;line-height:12px;color:#fff0c0;font-weight:700;transform:scaleX(1.0146);">3</span>
<span class="t" style="left:403.80px;top:747px;font-size:11.5px;line-height:12px;color:#fff;transform:scaleX(1.0285);">R...</span>
<span class="t" style="left:724.40px;top:747px;font-size:11.5px;line-height:12px;color:#f0c8e0;font-weight:700;transform:scaleX(0.8741);">2</span>
<span class="t" style="left:735.40px;top:747px;font-size:11.5px;line-height:12px;color:#fff;transform:scaleX(0.9202);">Mi...</span>
<svg style="left:438.5px;top:753px" width="6" height="4" viewBox="0 0 6 4"><path d="M0 0 L6 0 L3 3.500 Z" fill="#fff"/></svg>
<svg style="left:770px;top:753px" width="6" height="4" viewBox="0 0 6 4"><path d="M0 0 L6 0 L3 3.500 Z" fill="#fff"/></svg>
<svg style="left:208px;top:745px" width="16" height="16" viewBox="0 0 16 16"><rect x=".5" y=".5" width="15" height="15" fill="#f8d8a0" stroke="#e0a850" stroke-width="1"/><circle cx="8" cy="8.500" r="4.600" fill="#fbe8c0" stroke="#c88a28" stroke-width="1.300"/><path d="M8 5.500 V8.500 H10.500" fill="none" stroke="#a06818" stroke-width="1.100"/></svg>
<svg style="left:291px;top:745px" width="16" height="16" viewBox="0 0 16 16"><rect x=".5" y=".5" width="15" height="15" fill="#a86820"/><rect x="2" y="2" width="5" height="5" fill="#f0b838"/><rect x="9" y="2" width="5" height="5" fill="#c88028"/><rect x="2" y="9" width="5" height="5" fill="#d89830"/><rect x="9" y="9" width="5" height="5" fill="#f4c848"/><path d="M7 4.500 H9 M4.500 7 V9 M11.500 7 V9 M7 11.500 H9" stroke="#603808" stroke-width="1.200"/></svg>
<svg style="left:375px;top:745px" width="16" height="16" viewBox="0 0 16 16"><path d="M1 5 C1 1 5 1 8 3 C11 1 15 1 15 5 C15 10 11 14 8 16 C5 14 1 10 1 5 Z" fill="#c83020"/><ellipse cx="5.500" cy="6" rx="2.200" ry="2.800" fill="#e86858" opacity=".6"/></svg>
<svg style="left:457px;top:745px" width="16" height="17" viewBox="0 0 16 17"><rect x="1" y="1" width="8" height="7" rx="1" fill="#d8e4f4" stroke="#8098c0"/><rect x="6" y="5" width="9" height="8" rx="1" fill="#78b8f0" stroke="#4880c8"/><ellipse cx="10" cy="15" rx="5" ry="1.600" fill="#c8d4e8"/><ellipse cx="4" cy="10" rx="3" ry="1.200" fill="#c8d4e8"/></svg>
<svg style="left:540px;top:745px" width="16" height="16" viewBox="0 0 16 16"><circle cx="8" cy="8" r="7" fill="#f08020"/><circle cx="8.500" cy="6.500" r="4.200" fill="#3858c0"/><path d="M1.500 6 C3 12 8 14 13 11 C11 15 4 15.500 1.500 10 Z" fill="#f8b030"/><path d="M2 4 C5 2 7 5 6 8 C4 8 2 7 2 4 Z" fill="#e86018"/></svg>
<svg style="left:623px;top:746px" width="16" height="14" viewBox="0 0 16 14"><path d="M0.500 2.500 L1.500 1 L6 1 L7 2.500 L14 2.500 L14 5 L3 5 L1 12.500 L0.500 12.500 Z" fill="#e8c858" stroke="#a08428" stroke-width=".8"/><path d="M3 5 L15.500 5 L13.500 13 L0.800 13 Z" fill="#fbe88c" stroke="#a08428" stroke-width=".8"/></svg>
<svg style="left:706px;top:745px" width="16" height="16" viewBox="0 0 16 16"><rect x=".5" y=".5" width="15" height="15" fill="#f0f4e8" stroke="#3a7a38" stroke-width="1.200"/><rect x="2" y="3" width="12" height="10" fill="#4a9848"/><path d="M4 4.500 L12 11.500 M12 4.500 L4 11.500" stroke="#fff" stroke-width="2.200"/></svg>
<span class="t" style="left:790.00px;top:747px;font-size:11.5px;line-height:12px;color:#fff;transform:scaleX(0.8794);">IT</span>
<div style="left:823px;top:738px;width:201px;height:30px;background:linear-gradient(to bottom,#38a8f4 0%,#1c90ea 10%,#168ae6 25%,#1a8ce6 80%,#1478d0 100%);border-left:1px solid #0c4ca0;box-shadow:inset 1px 0 0 #4ab8f8"></div>
<svg style="left:814px;top:743px" width="19" height="19" viewBox="0 0 19 19"><defs><radialGradient id="gb" cx="40%" cy="35%" r="70%"><stop offset="0" stop-color="#8ad0ff"/><stop offset=".7" stop-color="#2a7ae8"/><stop offset="1" stop-color="#1850c0"/></radialGradient></defs><circle cx="9.500" cy="9.500" r="9" fill="url(#gb)" stroke="#a8d8ff" stroke-width=".8"/><path d="M11.500 5 L7 9.500 L11.500 14" fill="none" stroke="#fff" stroke-width="2.400"/></svg>
<svg style="left:834px;top:745px" width="16" height="16" viewBox="0 0 16 16"><rect x=".5" y=".5" width="15" height="15" fill="#f8d8a0" stroke="#e0a850" stroke-width="1"/><circle cx="8" cy="8.500" r="4.600" fill="#fbe8c0" stroke="#c88a28" stroke-width="1.300"/><path d="M8 5.500 V8.500 H10.500" fill="none" stroke="#a06818" stroke-width="1.100"/></svg>
<svg style="left:853px;top:745px" width="14" height="16" viewBox="0 0 14 16"><circle cx="7" cy="4.500" r="3.500" fill="#78c850"/><path d="M0.500 15.500 C0.500 9 4 8 7 8 C10 8 13.500 9 13.500 15.500 Z" fill="#68b840"/></svg>
<svg style="left:869px;top:745px" width="18" height="16" viewBox="0 0 18 16"><rect x="1" y="5" width="9" height="7" fill="#283060" stroke="#a8b8e0" stroke-width="1"/><rect x="3" y="13" width="5" height="2" fill="#c0c8e0"/><path d="M12 4 C13.500 6 13.500 9 12 11 M14.500 2.500 C17 5.500 17 9.500 14.500 12.500" fill="none" stroke="#e0ecff" stroke-width="1.200"/></svg>
<svg style="left:888px;top:745px" width="15" height="17" viewBox="0 0 15 17"><rect x="5" y="1" width="9" height="7" fill="#283060" stroke="#a8b8e0" stroke-width="1"/><rect x="7" y="9" width="5" height="2" fill="#c0c8e0"/><rect x="1" y="6" width="9" height="7" fill="#283060" stroke="#a8b8e0" stroke-width="1"/><rect x="3" y="14" width="5" height="2" fill="#c0c8e0"/></svg>
<svg style="left:905px;top:745px" width="15" height="17" viewBox="0 0 15 17"><rect x="5" y="1" width="9" height="7" fill="#283060" stroke="#a8b8e0" stroke-width="1"/><rect x="7" y="9" width="5" height="2" fill="#c0c8e0"/><rect x="1" y="6" width="9" height="7" fill="#283060" stroke="#a8b8e0" stroke-width="1"/><rect x="3" y="14" width="5" height="2" fill="#c0c8e0"/></svg>
<svg style="left:924px;top:745px" width="15" height="16" viewBox="0 0 15 16"><rect width="15" height="16" fill="#f4f4f4"/><path d="M1 1 H5 V15 H1 Z M5 8 L11 1 H15 L8 9 Z" fill="#d81818"/><path d="M6 8 L13 15 M13 15 V10 M13 15 H8" stroke="#000" stroke-width="2.400" fill="none"/></svg>
<svg style="left:942px;top:745px" width="16" height="16" viewBox="0 0 16 16"><circle cx="6.500" cy="6.500" r="5.500" fill="#484858" stroke="#b0b0c0" stroke-width="1.200"/><circle cx="6" cy="6" r="2.200" fill="#c86060"/><path d="M9 13 L14 9 L15.500 11 L11 15 Z" fill="#c8d0e8"/></svg>
<svg style="left:960px;top:744px" width="17" height="18" viewBox="0 0 17 18"><path d="M2 3 L8 1 L15 3 L16 10 L13 16 L5 17 L1 12 Z" fill="#18d018"/><path d="M4 8 C6 5 11 5 13 8 L11.500 9 L10 8 L10 10 L12 13 L5 13 L7 10 L7 8 L5.500 9 Z" fill="#0a7a18"/></svg>
<span class="t" style="left:982.90px;top:747px;font-size:11.5px;line-height:12px;color:#fff;transform:scaleX(0.9207);">16.10</span>
<svg style="left:13px;top:8px" width="15" height="15" viewBox="0 0 15 15"><rect width="15" height="15" fill="#e8ecf4"/><path d="M1 12 L5 8 L8 10 L13 4" fill="none" stroke="#2a4a90" stroke-width="1.3"/><path d="M1 7 L4 3 L8 7 L12 2" fill="none" stroke="#3aa030" stroke-width="1.5"/><rect x="3" y="9" width="10" height="5" fill="#c8d0e0" opacity=".7"/></svg>
<svg style="left:13px;top:33px" width="38" height="21" viewBox="0 0 38 21"><path d="M1.500 8 C1 3.500 5 1.500 10 2 C15 1.500 19.500 4 19.300 9 C19 14.500 15.500 18.800 11.500 19 C6 18.500 2 13 1.500 8 Z" fill="#d8301c"/><path d="M19.500 8 C21 4.500 25 3 29 3.800 C33 5 35.300 9 34.300 13 C33 17 29 19 25.500 18.700 C22 18.500 19 16.500 19 13 Z" fill="#dc3824"/><path d="M27 4.500 L31 1.500 L32 5.500 L36.500 6 L33 9 L34.500 13 L30.500 9.500 Z" fill="#6c9a30"/><path d="M31 5 L33 7.500 L32 10" stroke="#c8d060" stroke-width="1" fill="none"/><path d="M4.500 3.500 L5.500 1 M7.500 2.800 L8.500 .5 M10.500 2.800 L12.500 .8" stroke="#50301c" stroke-width="1.100"/><ellipse cx="13.500" cy="10" rx="4.500" ry="6.500" fill="#b82414" opacity=".55"/><ellipse cx="24" cy="8" rx="3" ry="2.500" fill="#f06850" opacity=".5"/></svg>
<svg style="left:973px;top:30px" width="30" height="30" viewBox="0 0 30 30"><rect width="30" height="30" fill="#ece8f0"/><path d="M8 0 V30 M15 0 V30 M22 0 V30 M0 8 H30 M0 15 H30 M0 22 H30" stroke="#d8c8d8" stroke-width="1"/><path d="M3 24 L9 19 L16 8 L22 15 L27 13" fill="none" stroke="#3a5aa0" stroke-width="2"/><path d="M3 12 L10 7 L16 13 L27 4" fill="none" stroke="#3aa830" stroke-width="2.4"/><rect x="9" y="28" width="21" height="2" fill="#e02020"/></svg>
<svg style="left:152px;top:215px" width="16" height="16" viewBox="0 0 16 16"><path d="M1 1 L6 5 L8 3 L11 7 L15 6 L14 15 L7 14 L5 10 L3 9 Z" fill="#f08a20"/><path d="M6 7 L9 7 L13 9 L13 14 L8 13 Z" fill="#fcc040"/><path d="M1 1 L5 7 L3 8 Z" fill="#d04818"/></svg>
<svg style="left:224px;top:188px" width="33" height="22" viewBox="0 0 33 22"><path d="M1.500 6 L4 2.500 L14 .8 L20 3 L24 5 L27 6 L22 14 L12 19 L7 13 Z" fill="#5c6064"/><path d="M4 2.500 L14 .8 L17 2.500 L7 5.500 Z" fill="#8c9094"/><path d="M3 6.500 L8 5.500 L14 12 L9 14.500 Z" fill="#a4a8ac"/><path d="M14 4 L21 6 L24 10 L17 9.500 Z" fill="#787c80"/><ellipse cx="13.500" cy="15" rx="5.800" ry="6" fill="#46586e"/><ellipse cx="13.800" cy="15.500" rx="4.200" ry="4.300" fill="#a4c6f0"/><ellipse cx="12.800" cy="14" rx="2" ry="1.800" fill="#d8e8fc" opacity=".8"/><ellipse cx="25.500" cy="12.500" rx="5.800" ry="6" fill="#46586e"/><ellipse cx="25.800" cy="13" rx="4.200" ry="4.300" fill="#a4c6f0"/><ellipse cx="24.800" cy="11.500" rx="2" ry="1.800" fill="#d8e8fc" opacity=".8"/></svg>
<svg style="left:425px;top:85px" width="14" height="17" viewBox="0 0 14 17"><path d="M1 5 C1 2 4 2 7 3 C10 2 13 2 13 6 C13 10 10 15 7 16 C4 15 1 10 1 5 Z" fill="#c83020"/><path d="M4 3 L7 0 L10 3 L7 4 Z" fill="#6a4020"/><ellipse cx="5.5" cy="7" rx="2" ry="3" fill="#e86050" opacity=".6"/></svg>
<svg style="left:658px;top:268px" width="30" height="30" viewBox="0 0 30 30"><defs><radialGradient id="ga" cx="40%" cy="30%" r="75%"><stop offset="0" stop-color="#8ee070"/><stop offset=".6" stop-color="#44b030"/><stop offset="1" stop-color="#2a8a1c"/></radialGradient></defs><circle cx="15" cy="15" r="14" fill="url(#ga)" stroke="#3a9a2a" stroke-width="1"/><path d="M6 12 H15 V7.5 L24 15 L15 22.5 V18 H6 Z" fill="#fff" stroke="#d0ecc8" stroke-width=".6"/></svg>
<svg style="left:656px;top:328px" width="34" height="34" viewBox="0 0 34 34"><path d="M31.45 10.51 L31.01 11.93 L28.66 12.14 L27.96 12.99 L28.20 15.33 L26.88 16.03 L25.08 14.52 L23.98 14.62 L22.49 16.45 L21.07 16.01 L20.86 13.66 L20.01 12.96 L17.67 13.20 L16.97 11.88 L18.48 10.08 L18.38 8.98 L16.55 7.49 L16.99 6.07 L19.34 5.86 L20.04 5.01 L19.80 2.67 L21.12 1.97 L22.92 3.48 L24.02 3.38 L25.51 1.55 L26.93 1.99 L27.14 4.34 L27.99 5.04 L30.33 4.80 L31.03 6.12 L29.52 7.92 L29.62 9.02 Z" fill="#c2c4ee" stroke="#6e70aa" stroke-width="1"/><circle cx="24" cy="9" r="2.5" fill="#ece9d8" stroke="#8a8cc0" stroke-width="0.8"/><path d="M20.30 22.49 L19.72 24.36 L16.64 24.63 L15.71 25.75 L16.03 28.83 L14.29 29.75 L11.92 27.76 L10.47 27.90 L8.51 30.30 L6.64 29.72 L6.37 26.64 L5.25 25.71 L2.17 26.03 L1.25 24.29 L3.24 21.92 L3.10 20.47 L0.70 18.51 L1.28 16.64 L4.36 16.37 L5.29 15.25 L4.97 12.17 L6.71 11.25 L9.08 13.24 L10.53 13.10 L12.49 10.70 L14.36 11.28 L14.63 14.36 L15.75 15.29 L18.83 14.97 L19.75 16.71 L17.76 19.08 L17.90 20.53 Z" fill="#c2c4ee" stroke="#6e70aa" stroke-width="1"/><circle cx="10.5" cy="20.5" r="3.3" fill="#ece9d8" stroke="#8a8cc0" stroke-width="0.8"/><path d="M19 18 L31.5 25 L19 32 Z" fill="#4cb838" stroke="#3a9a2a" stroke-width=".8"/></svg>
<svg style="left:656px;top:392px" width="34" height="34" viewBox="0 0 34 34"><path d="M31.34 11.05 L30.90 12.51 L28.49 12.72 L27.77 13.60 L28.01 16.00 L26.66 16.72 L24.81 15.17 L23.68 15.27 L22.15 17.14 L20.69 16.70 L20.48 14.29 L19.60 13.57 L17.20 13.81 L16.48 12.46 L18.03 10.61 L17.93 9.48 L16.06 7.95 L16.50 6.49 L18.91 6.28 L19.63 5.40 L19.39 3.00 L20.74 2.28 L22.59 3.83 L23.72 3.73 L25.25 1.86 L26.71 2.30 L26.92 4.71 L27.80 5.43 L30.20 5.19 L30.92 6.54 L29.37 8.39 L29.47 9.52 Z" fill="#c2c4ee" stroke="#6e70aa" stroke-width="1"/><circle cx="23.7" cy="9.5" r="2.5" fill="#ece9d8" stroke="#8a8cc0" stroke-width="0.8"/><path d="M19.80 22.99 L19.22 24.86 L16.14 25.13 L15.21 26.25 L15.53 29.33 L13.79 30.25 L11.42 28.26 L9.97 28.40 L8.01 30.80 L6.14 30.22 L5.87 27.14 L4.75 26.21 L1.67 26.53 L0.75 24.79 L2.74 22.42 L2.60 20.97 L0.20 19.01 L0.78 17.14 L3.86 16.87 L4.79 15.75 L4.47 12.67 L6.21 11.75 L8.58 13.74 L10.03 13.60 L11.99 11.20 L13.86 11.78 L14.13 14.86 L15.25 15.79 L18.33 15.47 L19.25 17.21 L17.26 19.58 L17.40 21.03 Z" fill="#c2c4ee" stroke="#6e70aa" stroke-width="1"/><circle cx="10" cy="21" r="3.3" fill="#ece9d8" stroke="#8a8cc0" stroke-width="0.8"/><rect x="17" y="20" width="12" height="12" fill="#f4f4f8" stroke="#9090a8" stroke-width="1"/><path d="M18 22 L22.5 28 L31 13" fill="none" stroke="#1c4aa8" stroke-width="2.6"/></svg>
<svg style="left:0;top:0" width="1024" height="768" viewBox="0 0 1024 768"><g fill="none" stroke="#000" stroke-width="1.2" stroke-linecap="round" stroke-linejoin="round"><path d="M74 291.3 L81.3 281.5 L81.3 306"/><path d="M65.5 317 L101 305.5"/><path d="M651 268 C648.5 266 648 262 650 259.3 C653 258 657 258.6 658.5 260 C659.5 263 659.3 266 659 268 C657.5 274 654 277.5 650 279.8 C647 281.5 643 281.8 641.6 282.8 C641.5 284.5 642 285.5 643 286 C646 287.5 650 288.6 653 289.2 L658 289.5"/><path d="M770 298 C775 296 782 296 785.5 297 C787 300 787 304 786 307.5 C783 310 779 310.5 776 310.8 C781 311 787 311.5 790 312.5 C792 317 792 321 791 325 C789 329 784 331.5 780 332 L768.75 332"/><path d="M253 321.5 L247.5 343 L260 343"/><path d="M258.75 333.75 L258.75 352.5"/></g></svg>
</body></html>
